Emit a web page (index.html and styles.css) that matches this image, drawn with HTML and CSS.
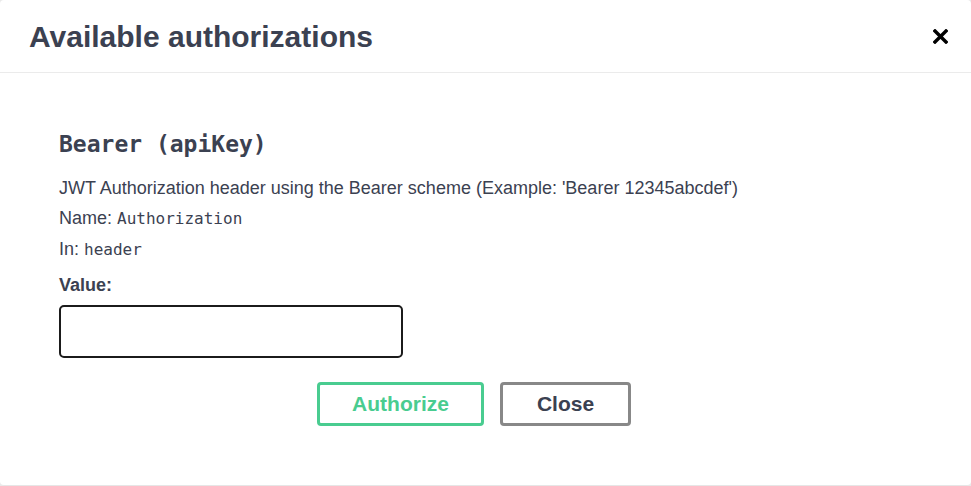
FILE: index.html
```html
<!DOCTYPE html>
<html lang="en">
<head>
    <meta charset="UTF-8">
    <meta name="viewport" content="width=device-width, initial-scale=1.0">
    <title>Available authorizations</title>
    <link rel="stylesheet" href="styles.css">
</head>
<body>

<div class="modal">
    <div class="modal-header">
        <h3>Available authorizations</h3>
        <button class="close-x" type="button" aria-label="Close">
            <svg width="15" height="15" viewBox="0 0 15 15">
                <path d="M2 2 L13 13 M13 2 L2 13" stroke="#000" stroke-width="3.4" stroke-linecap="square" fill="none"/>
            </svg>
        </button>
    </div>

    <div class="modal-content">
        <h4>Bearer (apiKey)</h4>
        <div class="line">JWT Authorization header using the Bearer scheme (Example: 'Bearer 12345abcdef')</div>
        <div class="line">Name: <code>Authorization</code></div>
        <div class="line">In: <code>header</code></div>
        <label class="value-label" for="value">Value:</label>
        <input type="text" id="value" class="value-input">

        <div class="btn-row">
            <button class="btn authorize" type="button">Authorize</button>
            <button class="btn close" type="button">Close</button>
        </div>
    </div>
</div>

</body>
</html>
```

FILE: styles.css
```css
body {
    margin: 0;
    background: #e9e9e9;
    font-family: 'Liberation Sans', Arial, sans-serif;
    color: #3b4151;
}

.modal {
    background: #fff;
    width: 971px;
    height: 486px;
    border-radius: 4px;
    border-bottom: 1px solid #e6e6e6;
    box-sizing: border-box;
}

.modal-header {
    display: flex;
    justify-content: space-between;
    align-items: center;
    padding: 1px 23px 0 29px;
    box-sizing: border-box;
    border-bottom: 1px solid #ebebeb;
    height: 73px;
}

.modal-header h3 {
    margin: 0;
    font-size: 30px;
    font-weight: bold;
    color: #3b4151;
}

.close-x {
    border: none;
    background: none;
    padding: 0;
    width: 15px;
    height: 15px;
    display: flex;
    cursor: pointer;
}

.modal-content {
    padding: 56px 0 0 59px;
}

h4 {
    margin: 0 0 14px;
    font-family: 'DejaVu Sans Mono', monospace;
    font-size: 23px;
    line-height: 30px;
    font-weight: bold;
    color: #3b4151;
}

.line {
    font-size: 18px;
    line-height: 30px;
}

code {
    font-family: 'DejaVu Sans Mono', monospace;
    font-size: 16px;
}

.value-label {
    display: block;
    margin-top: 8px;
    font-size: 18px;
    line-height: 24px;
    font-weight: bold;
}

.value-input {
    display: block;
    margin-top: 8px;
    width: 344px;
    height: 53px;
    box-sizing: border-box;
    border: 2px solid #1b1b1b;
    border-radius: 5px;
    font-size: 16px;
    padding: 0 10px;
}

.btn-row {
    display: flex;
    justify-content: center;
    gap: 16px;
    margin: 24px 0 0 -59px;
    padding-right: 23px;
}

.btn {
    height: 44px;
    background: #fff;
    border-radius: 4px;
    font-family: 'Liberation Sans', Arial, sans-serif;
    font-size: 21px;
    font-weight: bold;
    cursor: pointer;
}

.authorize {
    width: 167px;
    border: 3px solid #49cc90;
    color: #49cc90;
}

.close {
    width: 131px;
    border: 3px solid #888;
    color: #3b4151;
}
```
